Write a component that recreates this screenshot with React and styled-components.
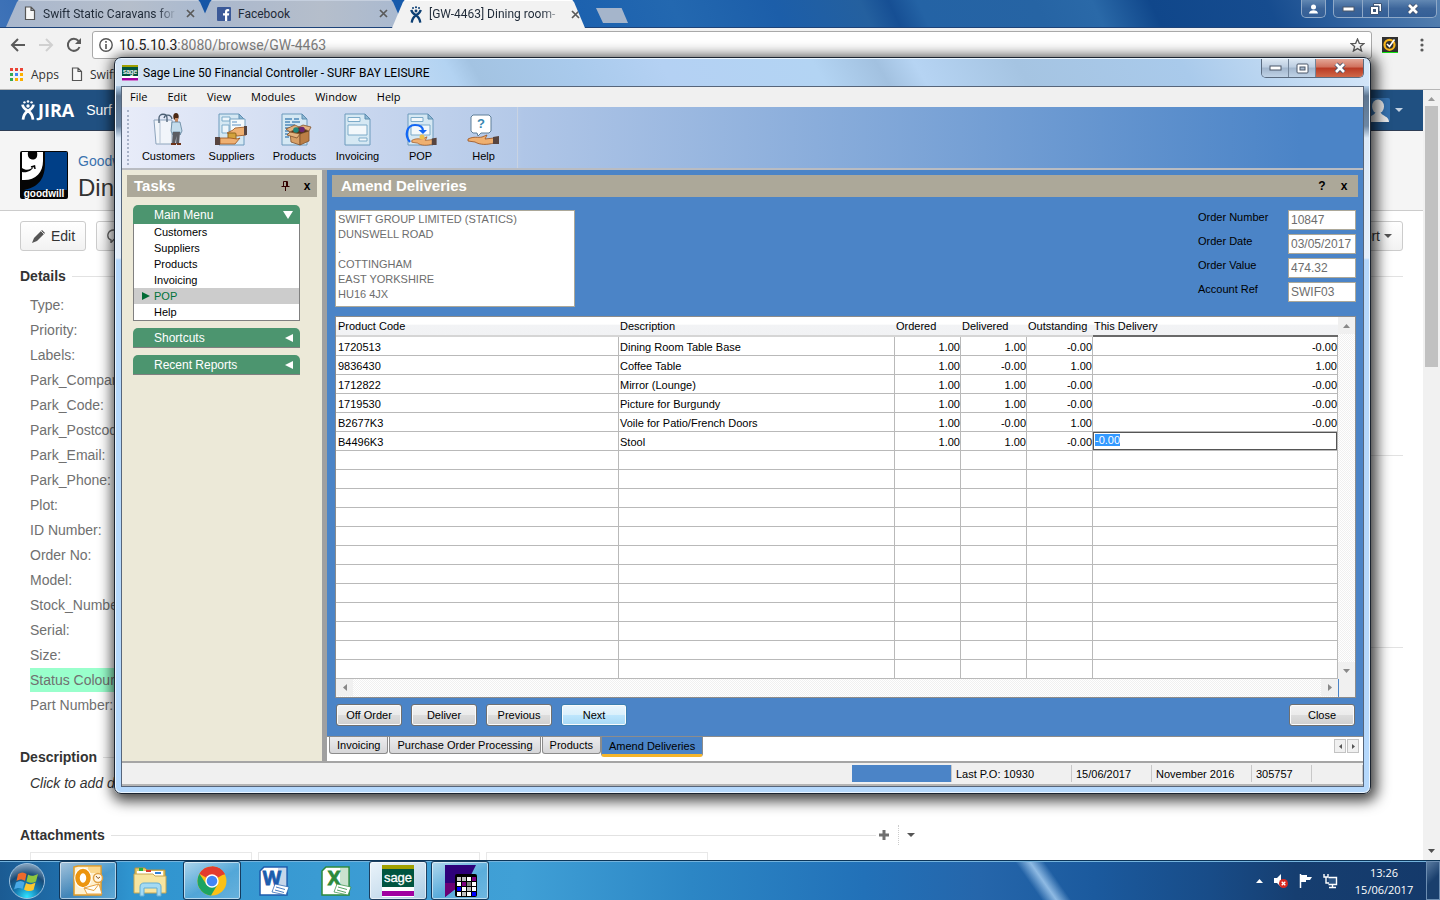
import React, { useEffect, useRef } from "react";
import styled, { createGlobalStyle } from "styled-components";

const GlobalStyle = createGlobalStyle`
	* {
		box-sizing: border-box;
	}

	body {
		margin: 0;
		overflow: hidden;
	}

	button, input, textarea {
		font: inherit;
		margin: 0;
	}

	svg {
		display: block;
		flex: none;
	}
`;

const segoe = `"Open Sans", "Noto Sans", sans-serif`;
const roboto = `Roboto, "Open Sans", sans-serif`;
const arial = `"Liberation Sans", Arial, sans-serif`;

const Desktop = styled.div`
	position: relative;
	display: flex;
	flex-direction: column;
	height: 100vh;
	overflow: hidden;
	background: #fff;
	font-family: ${arial};
`;

/* ---------- Browser ---------- */

const Browser = styled.div`
	flex: 1;
	min-height: 0;
	display: flex;
	flex-direction: column;
`;

const TabStrip = styled.div`
	height: 28px;
	flex: none;
	display: flex;
	align-items: flex-end;
	padding: 0 3px 0 6px;
	border-bottom: 1px solid #1d4379;
	background: linear-gradient(65deg, #3f73b8 0%, #1555a6 14%, #1a5fae 38%, #2368b0 47%, #1c5ea9 54%, #24609f 60%, #164f94 62%, #2463a5 64%, #2664a4 72%, #2a69a8 76%, #10478b 80%, #164c8f 88%, #3b6ba5 95%, #5580b0 100%);
`;

const BrowserTab = styled.div`
	position: relative;
	z-index: ${props => (props.$active ? 3 : props.$order)};
	width: ${props => (props.$active ? "193px" : "205px")};
	height: ${props => (props.$active ? "28px" : "27px")};
	margin: 0 ${props => (props.$active ? "11px" : "-12px")} ${props => (props.$active ? "-1px" : "0")} 0;
	padding: 0 ${props => (props.$active ? "5px" : "15px")} 0 18px;
	display: flex;
	align-items: center;
	gap: 7px;
	clip-path: polygon(0 100%, 11px 2px, 13px 0, calc(100% - 13px) 0, calc(100% - 11px) 2px, 100% 100%);
	background: ${props => (props.$active ? "#f2f2f2" : "linear-gradient(90deg, #a9b7cd, #b5becb 60%, #a9b9d0)")};
	box-shadow: inset 0 1px 0 ${props => (props.$active ? "#fff" : "#c5cfde")};
`;

const TabTitle = styled.span`
	flex: 1;
	overflow: hidden;
	white-space: nowrap;
	font: 12px/16px ${roboto};
	color: #1f2a38;
	mask-image: ${props => (props.$fade ? "linear-gradient(90deg, #000 85%, transparent 100%)" : "none")};
`;

const IconButton = styled.button`
	display: flex;
	align-items: center;
	justify-content: center;
	width: ${props => props.$w || 16}px;
	height: ${props => props.$h || 16}px;
	padding: 0;
	border: 0;
	background: transparent;
`;

const NewTab = styled.button`
	width: 32px;
	height: 15px;
	margin-bottom: 4px;
	padding: 0;
	border: 0;
	clip-path: polygon(0 0, 80% 0, 100% 100%, 22% 100%);
	background: #a5b5cb;
`;

const StripSpacer = styled.div`
	flex: 1;
`;

const ChromeButtons = styled.div`
	align-self: flex-start;
	display: flex;
	height: 18px;
	margin-left: 7px;
	border: 1px solid #8fa9c8;
	border-top: 0;
	border-radius: 0 0 5px 5px;
	overflow: hidden;
	background: linear-gradient(#6288b3, #3c659a 50%, #345f96);
`;

const ChromeButton = styled(IconButton)`
	height: 17px;
	border-right: 1px solid #8fa9c8;

	&:last-child {
		border-right: 0;
	}
`;

const NavBar = styled.div`
	height: 34px;
	flex: none;
	display: flex;
	align-items: center;
	padding: 0 10px 0 6px;
	background: #f2f2f2;
`;

const NavButtons = styled.div`
	display: flex;
	gap: 4px;
	margin-right: 6px;
`;

const Omnibox = styled.div`
	flex: 1;
	height: 28px;
	display: flex;
	align-items: center;
	gap: 6px;
	padding: 0 6px;
	border: 1px solid #a9a9a9;
	border-radius: 3px;
	background: #fff;
`;

const Address = styled.div`
	flex: 1;
	font: 14px/18px ${roboto};
	color: #808080;

	b {
		font-weight: 400;
		color: #222;
	}
`;

const NavExtras = styled.div`
	display: flex;
	align-items: center;
	gap: 16px;
	margin-left: 10px;
`;

const Bookmarks = styled.nav`
	height: 28px;
	flex: none;
	display: flex;
	align-items: center;
	gap: 12px;
	padding: 0 10px 2px;
	border-bottom: 1px solid #b6b6b6;
	background: #f2f2f2;
`;

const Bookmark = styled.a`
	display: flex;
	align-items: center;
	gap: 7px;
	font: 12px/16px ${segoe};
	color: #333;
	text-decoration: none;
`;

const Page = styled.div`
	flex: 1;
	min-height: 0;
	display: flex;
`;

const PageContent = styled.div`
	flex: 1;
	min-width: 0;
	overflow: hidden;
	background: #fff;
	color: #333;
`;

const PageScroll = styled.div`
	width: 17px;
	display: flex;
	flex-direction: column;
	justify-content: space-between;
	align-items: center;
	padding: 7px 2px;
	background: #f1f1f1;
`;

const PageThumb = styled.div`
	width: 13px;
	height: 261px;
	margin: 5px 0 auto;
	background: #c1c1c1;
`;

const JiraHeader = styled.header`
	height: 41px;
	display: flex;
	align-items: center;
	padding: 0 20px 0 21px;
	border-bottom: 1px solid #2e3d54;
	background: #205081;
	color: #fff;
	font-size: 14px;
`;

const JiraLogo = styled.a`
	display: flex;
	align-items: center;
	gap: 3px;
	margin-right: 12px;
	font: 700 18px/24px ${segoe};
	color: #fff;
	text-decoration: none;
`;

const Avatar = styled.div`
	margin-left: auto;
	display: flex;
	align-items: center;
	gap: 5px;
`;

const IssueHeader = styled.div`
	height: 80px;
	display: flex;
	align-items: flex-start;
	gap: 10px;
	padding: 20px;
	border-bottom: 1px solid #ccc;
	background: #f5f5f5;
`;

const IssueTitle = styled.div`
	a {
		display: block;
		font-size: 14px;
		line-height: 20px;
		color: #3b73af;
		text-decoration: none;
	}

	h1 {
		margin: 2px 0 0;
		font-size: 24px;
		line-height: 30px;
		font-weight: 400;
	}
`;

const IssueActions = styled.div`
	display: flex;
	gap: 10px;
	padding: 10px 20px;
`;

const JiraButton = styled.button`
	height: 30px;
	display: flex;
	align-items: center;
	gap: 4px;
	padding: 0 10px;
	margin-left: ${props => (props.$end ? "auto" : "0")};
	border: 1px solid #ccc;
	border-radius: 3px;
	background: linear-gradient(#fff, #f2f2f2);
	font-size: 14px;
	color: #333;
`;

const Columns = styled.div`
	display: grid;
	grid-template-columns: 895px 1fr;
	gap: 23px;
	padding: 5px 20px 0;
`;

const SectionHead = styled.div`
	display: flex;
	align-items: center;
	gap: 6px;
	height: 20px;
	margin-top: ${props => props.$top || 0}px;

	h2 {
		margin: 0;
		font-size: 14px;
		line-height: 20px;
	}
`;

const Rule = styled.div`
	flex: 1;
	height: 1px;
	background: #e2e2e2;
`;

const FieldList = styled.ul`
	margin: 7px 0 0;
	padding: 0 10px;
	list-style: none;
`;

const Field = styled.li`
	height: 24px;
	margin-bottom: 1px;
	width: 150px;
	font-size: 14px;
	line-height: 24px;
	color: #707070;
	background: ${props => (props.$marked ? "#99ffcc" : "none")};
`;

const Hint = styled.p`
	margin: 6px 10px 0;
	font-size: 14px;
	line-height: 20px;
	font-style: italic;
`;

const SectionTools = styled.div`
	display: flex;
	align-items: center;
	gap: 8px;
	margin-left: -4px;
`;

const DottedLine = styled.i`
	height: 20px;
	border-left: 1px dotted #ccc;
`;

const Attachments = styled.div`
	display: flex;
	gap: 6px;
	padding: 7px 10px 0;
`;

const Attachment = styled.div`
	width: 222px;
	height: 60px;
	border: 1px solid #e8e8e8;
`;

/* ---------- Sage window ---------- */

const SageWindow = styled.section`
	position: absolute;
	z-index: 10;
	top: 57px;
	left: 114px;
	right: 69px;
	bottom: 106px;
	display: flex;
	flex-direction: column;
	padding: 0 6px 6px;
	border: 1px solid #1b2430;
	border-radius: 7px;
	background: linear-gradient(#bcd8f3 0, #bcd8f3 27px, #5d7590 38px, #6d87a4 68px, #dce9f7 80px, #e4eef9 200px, #b5d8fc 202px, #b5d8fc 100%);
	box-shadow: inset 0 0 0 1px #eaf5ff, 2px 3px 14px 4px rgba(0,0,0,.75);
`;

const TitleBar = styled.div`
	height: 27px;
	flex: none;
	display: flex;
	align-items: center;
	gap: 5px;
	margin: 1px -5px 0;
	padding: 0 5px 0 6px;
	border-radius: 6px 6px 0 0;
	background: linear-gradient(60deg, #d5e4f4 0%, #c2dbf4 22%, #b3d3f2 27%, #a3c3e2 29%, #a9caec 37%, #b4d1f3 44%, #b3d4f3 56%, #a2c1e0 61%, #b6d4f3 64%, #a5c4e2 72%, #a9caeb 85%, #d5e7f9 100%);
`;

const WindowTitle = styled.h1`
	flex: 1;
	margin: 0;
	font: 400 12px/16px ${roboto};
	color: #000;
`;

const Caption = styled.div`
	align-self: flex-start;
	display: flex;
	height: 19px;
	border: 1px solid #5a6b80;
	border-top: 0;
	border-radius: 0 0 5px 5px;
	overflow: hidden;
`;

const CaptionButton = styled(IconButton)`
	width: ${props => (props.$close ? 47 : 27)}px;
	height: 18px;
	border-right: ${props => (props.$close ? "0" : "1px solid #73859a")};
	background: ${props => (props.$close
		? "linear-gradient(#e4a797, #d0705c 45%, #b93a24 50%, #d06848)"
		: "linear-gradient(#dbe7f3, #bccde0 45%, #a2b6cd 50%, #bfd2e6)")};
`;

const Client = styled.div`
	flex: 1;
	min-height: 0;
	display: flex;
	flex-direction: column;
	border: 1px solid #56657a;
	background: #f0f0f0;
`;

const MenuBar = styled.nav`
	height: 20px;
	flex: none;
	display: flex;
	align-items: center;
	gap: 20px;
	padding: 0 8px;
	background: #f0f0f0;

	a {
		font: 11px/16px ${segoe};
		color: #000;
		text-decoration: none;
	}
`;

const ToolBar = styled.div`
	height: 63px;
	flex: none;
	display: flex;
	border-bottom: 2px solid #b9bcc2;
	background: linear-gradient(90deg, #e8ecf9 0, #b4c9e8 395px, #b0c6e7 400px, #4b84c7 95%);
`;

const Grip = styled.i`
	width: 15px;
	margin: 3px -5px 3px 5px;
	border-left: 2px dotted #a9b3c8;
`;

const ToolGroup = styled.div`
	display: flex;
	padding-right: 2px;
	border-right: 1px solid #c9d3e2;
`;

const ToolButton = styled.button`
	width: 63px;
	display: flex;
	flex-direction: column;
	align-items: center;
	gap: 2px;
	padding: 6px 0 0;
	border: 0;
	background: transparent;
	font: 11px/14px ${arial};
	color: #000;
`;

const Workspace = styled.div`
	flex: 1;
	min-height: 0;
	display: flex;
	border-bottom: 2px solid #a5a5a5;
`;

const TaskPane = styled.aside`
	width: 205px;
	padding: 5px;
	border-right: 5px solid #a0a0a0;
	background: #ece9d8;
`;

const PaneHeader = styled.div`
	height: 22px;
	flex: none;
	display: flex;
	align-items: center;
	gap: ${props => (props.$wide ? 10 : 8)}px;
	padding: 0 ${props => (props.$wide ? 8 : 4)}px 0 ${props => (props.$wide ? 9 : 7)}px;
	background: #aca899;

	h2 {
		flex: 1;
		margin: 0;
		font-size: 15px;
		line-height: 20px;
		color: #fff;
	}

	button {
		width: 12px;
		height: 16px;
		padding: 0;
		border: 0;
		background: none;
		font: 700 12px/16px ${arial};
		color: #000;
	}
`;

const TaskGroups = styled.div`
	display: flex;
	flex-direction: column;
	gap: 7px;
	padding: 8px 17px 0 6px;
`;

const GroupTitle = styled.button`
	width: 100%;
	height: ${props => (props.$open ? 19 : 20)}px;
	display: flex;
	align-items: center;
	justify-content: space-between;
	padding: 0 7px 0 21px;
	border: 0;
	border-bottom: ${props => (props.$open ? "0" : "1px solid #808080")};
	border-radius: 5px 5px 0 0;
	background: #4c956f;
	font-size: 12px;
	line-height: 16px;
	color: #fff;
`;

const GroupList = styled.div`
	border: 1px solid #808080;
	border-top: 0;
	background: #fff;
`;

const GroupItem = styled.a`
	display: flex;
	align-items: center;
	height: 16px;
	padding-left: ${props => (props.$current ? 8 : 20)}px;
	gap: 4px;
	background: ${props => (props.$current ? "#ccc" : "none")};
	font-size: 11px;
	line-height: 16px;
	color: ${props => (props.$current ? "#00733a" : "#000")};
	text-decoration: none;
`;

const Main = styled.main`
	flex: 1;
	min-width: 0;
	display: flex;
	flex-direction: column;
	background: #4b84c7;
	font: 11px/14px ${arial};
	color: #000;
`;

const MainInner = styled.div`
	flex: 1;
	min-height: 0;
	display: flex;
	flex-direction: column;
	padding: 5px 5px 0;
`;

const OrderHead = styled.div`
	display: flex;
	justify-content: space-between;
	align-items: flex-start;
	padding: 13px 2px 9px 3px;
`;

const SupplierAddress = styled.textarea`
	width: 240px;
	height: 97px;
	padding: 1px 2px;
	border: 1px solid #aca899;
	resize: none;
	overflow: hidden;
	outline: 0;
	background: #fff;
	font: 11px/15px ${arial};
	color: #6d6d6d;
`;

const OrderFields = styled.div`
	display: flex;
	flex-direction: column;
	gap: 4px;
`;

const OrderField = styled.label`
	display: flex;
	gap: 10px;

	span {
		width: 80px;
	}

	input {
		width: 68px;
		height: 20px;
		padding: 0 2px;
		border: 1px solid #aca899;
		background: #fff;
		font-size: 12px;
		color: #6d6d6d;
	}
`;

const GridBox = styled.div`
	flex: 1;
	min-height: 0;
	display: grid;
	grid-template-columns: 1fr 17px;
	grid-template-rows: 1fr 18px;
	margin: 0 2px 0 3px;
	border: 1px solid #8c8c8c;
	background: #fff;
	overflow: hidden;
`;

const GridView = styled.div`
	overflow: hidden;
`;

const Grid = styled.table`
	width: 100%;
	table-layout: fixed;
	border-collapse: separate;
	border-spacing: 0;
	font: 11px/14px ${arial};

	th {
		height: 20px;
		padding: 0 1px 1px;
		border-bottom: 2px solid #d5d5d5;
		background: linear-gradient(#fff 40%, #f2f3f5 45%, #f1f2f4);
		font-weight: 400;
		text-align: left;
		white-space: nowrap;
	}

	th:first-child {
		padding-left: 2px;
	}

	th:last-child {
		border-bottom: 2px solid #696969;
	}
`;

const Cell = styled.td`
	height: 19px;
	padding: ${props => (props.$editing ? "0" : "2px 0 0 1px")};
	border-right: 1px solid #b9b9b9;
	border-bottom: 1px solid #b9b9b9;
	text-align: ${props => (props.$num ? "right" : "left")};
	white-space: nowrap;

	&:first-child {
		padding-left: 2px;
	}
`;

const CellInput = styled.input`
	display: block;
	width: 100%;
	height: 18px;
	padding: 0 1px 2px;
	border: 1px solid #555;
	outline: 0;
	background: #fff;
	color: #000;

	&::selection {
		background: #3399ff;
		color: #fff;
	}
`;

const ScrollTrack = styled.div`
	display: flex;
	flex-direction: ${props => (props.$row ? "row" : "column")};
	justify-content: space-between;
	background: repeating-conic-gradient(#f0f0f0 0 25%, #fff 0 50%) 0 0 / 2px 2px;
`;

const ScrollArrow = styled(IconButton)`
	width: 17px;
	height: 17px;
	background: #f0f0f0;
`;

const Corner = styled.div`
	border-left: 1px solid #4b84c7;
	background: #f0f0f0;
`;

const ButtonRow = styled.div`
	display: flex;
	gap: 9px;
	padding: 6px 3px 10px 4px;
`;

const SageButton = styled.button`
	width: 66px;
	height: 22px;
	margin-left: ${props => (props.$end ? "auto" : "0")};
	padding: 0;
	border: 1px solid ${props => (props.$hot ? "#3c7fb1" : "#707070")};
	border-radius: 3px;
	box-shadow: inset 0 0 0 1px #fbfbfb;
	background: ${props => (props.$hot
		? "linear-gradient(#eaf6fd, #d9f0fc 50%, #bee6fd 50%, #a7d9f5)"
		: "linear-gradient(#f2f2f2, #ebebeb 50%, #dddddd 50%, #cfcfcf)")};
	color: #000;
`;

const ViewTabs = styled.div`
	height: 25px;
	flex: none;
	display: flex;
	align-items: flex-start;
	gap: 1px;
	padding: 0 4px 0 2px;
	border-top: 1px solid #8c8c8c;
	background: #fff;
`;

const ViewTab = styled.button`
	height: ${props => (props.$active ? 20 : 17)}px;
	margin-left: ${props => (props.$active ? "-1px" : "0")};
	padding: 0 7px;
	border: 1px solid #8c8c8c;
	border-top: 0;
	border-bottom: ${props => (props.$active ? "3px solid #f5b52b" : "1px solid #8c8c8c")};
	border-radius: 0 0 3px 3px;
	background: ${props => (props.$active ? "#4b84c7" : "linear-gradient(#ececee, #d6d6d8)")};
	white-space: nowrap;
	color: #000;
`;

const TabScroll = styled.div`
	display: flex;
	gap: 1px;
	margin: 2px 0 0 auto;

	button {
		width: 12px;
		height: 14px;
		border: 1px solid #c3c3c3;
		background: #f0f0f0;
	}
`;

const StatusBar = styled.footer`
	height: 23px;
	flex: none;
	display: flex;
	justify-content: flex-end;
	padding: 2px 0;
	border-bottom: 2px solid #b5b5b5;
	background: #f0f0f0;
	font: 11px/18px ${arial};
	color: #000;
`;

const StatusCell = styled.span`
	width: ${props => props.$w}px;
	padding-left: 4px;
	border-right: 1px solid #c8c8c8;
	background: ${props => (props.$fill ? "#4b84c7" : "none")};
`;

/* ---------- Taskbar ---------- */

const Taskbar = styled.div`
	height: 40px;
	flex: none;
	display: flex;
	align-items: stretch;
	border-top: 1px solid #0c3558;
	box-shadow: inset 0 1px 0 #74b3dd;
	background: linear-gradient(55deg, transparent 71%, rgba(190,225,255,.7) 72%, transparent 73%),
		linear-gradient(90deg, #1b5b93 0, #1f6ca8 4%, #2f94cf 9%, #3a9bd3 22%, #40a0d6 36%, #2c86c5 48%, #2271b8 60%, #2566ab 68%, #1b5a9e 76%, #184c88 84%, #163e70 90%, #14396a 100%);
`;

const StartButton = styled(IconButton)`
	width: 54px;
	height: 39px;
	margin-right: 5px;
`;

const TaskButtons = styled.div`
	display: flex;
	gap: 4px;
`;

const TaskButton = styled(IconButton)`
	width: 58px;
	height: 39px;
	border: ${props => (props.$lit ? "1px solid rgba(10,45,80,.9)" : "1px solid transparent")};
	border-radius: 3px;
	box-shadow: ${props => (props.$lit ? "inset 0 0 0 1px rgba(255,255,255,.55)" : "none")};
	background: ${props => ({
		active: "linear-gradient(150deg, #eaf3fa, #cfe2f0 50%, #a9cce4)",
		open: "linear-gradient(150deg, rgba(255,255,255,.6), rgba(255,255,255,.15) 55%, rgba(255,255,255,.25))"
	})[props.$lit] || "none"};
`;

const Tray = styled.div`
	margin-left: auto;
	display: flex;
	align-items: center;
	gap: 10px;
`;

const Clock = styled.div`
	width: 60px;
	margin: 0 2px 0 6px;
	text-align: center;
	font: 11px/17px ${segoe};
	white-space: nowrap;
	color: #fff;
`;

const ShowDesktop = styled.button`
	align-self: stretch;
	width: 14px;
	padding: 0;
	border: 1px solid #6d8eb2;
	background: linear-gradient(135deg, #5a7ba0, #1a3f6d 50%);
`;

/* ---------- Icons ---------- */

const Cross = ({ color = "#5a5a5a", size = 9 }) => (
	<svg width={size} height={size} viewBox="0 0 9 9" aria-hidden="true">
		<path d="M1 1 L8 8 M8 1 L1 8" stroke={color} strokeWidth="1.7" />
	</svg>
);

const PageIcon = () => (
	<svg width="12" height="15" viewBox="0 0 12 15" aria-hidden="true">
		<path d="M1.5 1 H7 L10.5 4.500 V13.500 H1.500 Z M7 1 V4.500 H10.500" fill="#f7f7f7" stroke="#555" strokeWidth="1.2" />
	</svg>
);

const Facebook = () => (
	<svg width="14" height="14" viewBox="0 0 14 14" aria-hidden="true">
		<rect width="14" height="14" rx="1" fill="#3b5998" />
		<path d="M8 14 V8.500 H6 V6.300 H8 V4.800 C8 3 9 2.100 10.700 2.100 L12.200 2.200 V4.200 H11 C10.400 4.200 10.200 4.500 10.200 5 V6.300 H12.200 L11.900 8.500 H10.200 V14 Z" fill="#fff" />
	</svg>
);

const JiraMan = ({ color, size = 16 }) => (
	<svg width={Math.round(size * 0.7)} height={size} viewBox="0 0 15 22" aria-hidden="true">
		<g fill={color}>
			<circle cx="7.500" cy="1.600" r="1.400" />
			<circle cx="3.600" cy="2.600" r="1.300" />
			<circle cx="11.400" cy="2.600" r="1.300" />
			<circle cx="7.500" cy="6.500" r="1.900" />
		</g>
		<path d="M1.500 5 C2 9 5 10.500 7.500 12 C10.500 14 12.500 16.500 13 21.500 M13.500 5 C13 9 10 10.500 7.500 12 C4.500 14 2.500 16.500 2 21.500" fill="none" stroke={color} strokeWidth="3" />
	</svg>
);

const Triangle = ({ dir = "down", color = "#555", w = 8, h = 4 }) => {
	const shapes = {
		down: `0,0 ${w},0 ${w / 2},${h}`,
		up: `0,${h} ${w},${h} ${w / 2},0`,
		left: `${w},0 ${w},${h} 0,${h / 2}`,
		right: `0,0 0,${h} ${w},${h / 2}`
	};
	return (
		<svg width={w} height={h} aria-hidden="true">
			<polygon points={shapes[dir]} fill={color} />
		</svg>
	);
};

const Minimise = ({ outline = "#4b5768" }) => (
	<svg width="13" height="6" aria-hidden="true">
		<rect x="1" y="1" width="11" height="4" fill="#fff" stroke={outline} />
	</svg>
);

const Restore = () => (
	<svg width="12" height="12" viewBox="0 0 12 12" aria-hidden="true">
		<path d="M3.500 .5 H11.500 V8.500 H9 V3 H3.500 Z M.5 3.500 H8.500 V11.500 H.5 Z" fill="#fff" stroke="#3c5475" />
		<rect x="3" y="6" width="3" height="3" fill="#3c5475" />
	</svg>
);

const Maximise = () => (
	<svg width="13" height="11" aria-hidden="true">
		<rect x="1" y="1" width="11" height="9" rx="1" fill="#fff" stroke="#4b5768" />
		<rect x="4" y="4" width="5" height="3" fill="#a9bacd" stroke="#4b5768" />
	</svg>
);

const BoldCross = () => (
	<svg width="14" height="12" viewBox="0 0 14 12" aria-hidden="true">
		<path d="M3 2 L11 10 M11 2 L3 10" stroke="#43506a" strokeWidth="4.500" />
		<path d="M3 2 L11 10 M11 2 L3 10" stroke="#fff" strokeWidth="2.700" />
	</svg>
);

const SageLogo = ({ size = 16 }) => (
	<svg width={size} height={size} viewBox="0 0 32 32" aria-hidden="true">
		<rect width="32" height="32" fill="#fff" />
		<rect width="32" height="4" fill="#a0a000" />
		<rect y="4" width="32" height="18" fill="#005540" />
		<rect y="26" width="32" height="5" fill="#a000a0" />
		<text x="16" y="17" textAnchor="middle" fontFamily="Liberation Sans, sans-serif" fontSize="13" stroke="#fff" strokeWidth=".3" fill="#fff">sage</text>
	</svg>
);

const Goodwill = () => (
	<svg width="48" height="48" viewBox="0 0 48 48" aria-hidden="true">
		<rect width="48" height="48" rx="2" fill="#050505" />
		<path d="M25 1 H47 V39 H4 C20 36 25 26 25 12 Z" fill="#003f87" />
		<path d="M2 1 H8 C7 6 10 8.500 13 8.500 C16 8.500 18 6 17 1 H23 V10 C23 22 15 30 2 29 V21 C7 22 12 20 14 15 C11 19 6 20 2 17 Z" fill="#fff" />
		<circle cx="12.500" cy="4" r="4" fill="#050505" />
		<path d="M11 16 L14.500 15 L15 18" fill="none" stroke="#050505" strokeWidth="1.500" />
		<text x="24" y="46" textAnchor="middle" fontFamily="Liberation Sans, sans-serif" fontWeight="700" fontSize="10" fill="#fff">goodwill</text>
	</svg>
);

const Sheet = () => (
	<g>
		<path d="M4 1 H24 L29 6 V32 H4 Z" fill="#d5e8f3" stroke="#6c9abc" />
		<path d="M24 1 V6 H29 Z" fill="#8fb9d4" stroke="#5d8db0" />
	</g>
);

const Hand = () => (
	<g>
		<path d="M1 26 C7 23 11 25 15 24 L20 22 L18 26 L27 25 V30 C20 32 13 32 8 29 L1 28 Z" fill="#efb071" stroke="#99501d" strokeWidth=".8" />
		<path d="M26 24 L32 23 V31 L26 31 Z" fill="#57443f" />
	</g>
);

const toolIcons = {
	Customers: (
		<g>
			<path d="M2 7 H20 V31 H4 Z" fill="#f1f5fa" stroke="#8da4bc" />
			<path d="M8 7 V31" stroke="#b5c4d4" />
			<path d="M7 10 V5 C7 0 15 0 15 5 V9 M12 5 C13 1 19 1 20 6" fill="none" stroke="#4b5f73" strokeWidth="1.300" />
			<ellipse cx="24" cy="3.500" rx="2.700" ry="3.500" fill="#4b2814" />
			<path d="M23 5 H26 V9 H23 Z" fill="#c98c62" />
			<path d="M20 9 H28 L30 18 L28 22 V19 H21 V22 L19 18 Z" fill="#c3dcec" stroke="#5f8299" strokeWidth=".8" />
			<path d="M21 19 H28 L27 31 H24 L24.500 23 L23 31 H20 Z" fill="#5b5d63" />
			<path d="M19 30 H24 V32 H19 Z M25 30 H29 V32 H25 Z" fill="#6d3319" />
		</g>
	),
	Suppliers: (
		<g>
			<Sheet />
			<path d="M7 4 H15 V8 H7 Z M7 12 H14 V20 H7 Z" fill="#eef6fb" stroke="#7cabc9" />
			<path d="M15 6 H30 V20 H15 Z" fill="#f6fafc" stroke="#77a3c2" />
			<path d="M17 9 H22 M17 12 H26" stroke="#5c91c2" />
			<path d="M31 14 V22 L22 23 L12 20 L18 17 L20 15 Z" fill="#efb071" stroke="#99501d" strokeWidth=".8" />
			<path d="M29 13 H32 V22 H29 Z" fill="#57443f" />
			<rect x="13" y="20" width="8" height="7" rx="1" fill="#d3a23c" stroke="#8f661c" />
			<path d="M5 25 L15 25 L22 26 L25 25 L20 31 H5 Z" fill="#efb071" stroke="#99501d" strokeWidth=".8" />
			<path d="M0 24 H5 V32 H0 Z" fill="#57443f" />
		</g>
	),
	Products: (
		<g>
			<Sheet />
			<path d="M7 6 H14 M16 6 H21 M7 9 H12 M14 9 H22 M7 12 H17 M7 15 H12 M7 18 H12 M7 21 H11 M7 24 H11" stroke="#4f89bb" strokeWidth="1.300" />
			<path d="M12 19 L22 21 V32 L13 29 Z" fill="#d8a067" stroke="#80512b" strokeWidth=".8" />
			<path d="M22 21 L31 18 V28 L22 32 Z" fill="#bb7e45" stroke="#80512b" strokeWidth=".8" />
			<path d="M12 19 L21 14 L31 18 L22 21 Z" fill="#593516" />
			<path d="M12 19 L8 16 L17 12 L21 14 Z M31 18 L33 14 L25 12 L21 14 Z M12 19 L9 22 L19 25 L22 21 Z" fill="#e3b27e" stroke="#80512b" strokeWidth=".8" />
			<circle cx="18" cy="17" r="2.800" fill="#20877d" />
			<circle cx="24" cy="16.500" r="2.800" fill="#6b2770" />
		</g>
	),
	Invoicing: (
		<g>
			<Sheet />
			<path d="M7 4.500 H19 V8.500 H7 Z M7 12 H26 V22 H7 Z M18 25 H26 V28 H18 Z" fill="#f3f8fb" stroke="#7cabc9" />
		</g>
	),
	POP: (
		<g>
			<Sheet />
			<path d="M7 4.500 H19 V8.500 H7 Z M7 12 H26 V22 H7 Z" fill="#f3f8fb" stroke="#7cabc9" />
			<g transform="translate(7 4) scale(.8 .9)"><Hand /></g>
			<circle cx="18" cy="24" r="2.500" fill="#edc24f" />
			<path d="M6 29 C0 22 3 12 11 12 C17 12 19 15 19 18" fill="none" stroke="#1266f5" strokeWidth="2.200" />
			<path d="M14.500 17 H23 L19 21 Z" fill="#1266f5" />
		</g>
	),
	Help: (
		<g>
			<path d="M6 2 H22 L24 4 V18 L22 20 H14 L11 23 L10 20 H6 L4 18 V4 Z" fill="#fff" stroke="#5f7f99" />
			<text x="14" y="15" textAnchor="middle" fontFamily="Liberation Sans, sans-serif" fontWeight="700" fontSize="13" fill="#3a87b0">?</text>
			<Hand />
		</g>
	)
};

const AppsGrid = () => {
	const colors = ["#ea4335", "#ea4335", "#ea4335", "#34a853", "#4285f4", "#fbb000", "#34a853", "#fbb000", "#fbb000"];
	return (
		<svg width="14" height="14" aria-hidden="true">
			{colors.map((c, i) => <rect key={i} x={(i % 3) * 5} y={Math.floor(i / 3) * 5} width="3" height="3" fill={c} />)}
		</svg>
	);
};

const StartOrb = () => (
	<svg width="38" height="38" viewBox="0 0 38 38" aria-hidden="true">
		<defs>
			<radialGradient id="orb" cx=".5" cy=".95" r=".9">
				<stop offset="0" stopColor="#2fe3ff" />
				<stop offset=".4" stopColor="#1478b0" />
				<stop offset=".7" stopColor="#174a77" />
				<stop offset="1" stopColor="#7d9cb8" />
			</radialGradient>
		</defs>
		<circle cx="19" cy="19" r="17.500" fill="url(#orb)" stroke="#9dc1de" />
		<path d="M10 12 C13 10 16 10 18.500 12 L17 19 C14 17 12 17 8.500 19 Z" fill="#ee6a2c" />
		<path d="M20 12.500 C23 14.500 26 14 30 12 L28 19.500 C25 21.500 22 21 18.500 19.500 Z" fill="#8ec63f" />
		<path d="M8 20.500 C11 18.500 14 18.500 16.500 20.500 L14.500 27 C12 25.500 9 25.500 6 27.500 Z" fill="#49a9e6" />
		<path d="M18 21 C21 23 24 22.500 27.500 20.500 L25.500 28 C22 30 19 29 16 27.500 Z" fill="#fdc72f" />
	</svg>
);

const Outlook = () => (
	<svg width="32" height="32" viewBox="0 0 32 32" aria-hidden="true">
		<path d="M2 2 L6 1 H29 V30 H2 Z" fill="#fff1cf" stroke="#e49c25" strokeWidth="1.500" />
		<path d="M16 2 H28 V8 H16 Z" fill="#fbd88d" />
		<ellipse cx="11" cy="13" rx="6" ry="7.500" fill="#fff" stroke="#fff" strokeWidth="5.500" />
		<ellipse cx="11" cy="13" rx="5.500" ry="7" fill="none" stroke="#ec950f" strokeWidth="4.500" />
		<path d="M12 23 L27 19 L30 29 H15 Z" fill="#fffdf5" stroke="#e6a242" />
		<path d="M12 23 L22 25.500 L27 19" fill="none" stroke="#e6a242" />
		<circle cx="26" cy="13" r="4.500" fill="#fff8e7" stroke="#e2a244" strokeWidth="1.500" />
		<path d="M24 11 L26 13.500 L28 12" fill="none" stroke="#8c5720" />
	</svg>
);

const Explorer = () => (
	<svg width="34" height="32" viewBox="0 0 34 32" aria-hidden="true">
		<path d="M2 3 H12 L14 5 H32 V27 H2 Z" fill="#e8cb6c" stroke="#b9933a" />
		<path d="M4 6 H30 V14 H4 Z" fill="#fff" />
		<path d="M6 3 H10 V6 H6 Z" fill="#27b03b" />
		<path d="M13 5 H18 V7 H13 Z" fill="#d93b2c" />
		<path d="M22 7 H28 V9 H22 Z" fill="#2f83d8" />
		<path d="M1 9 H20 L22 11 H33 V28 H1 Z" fill="#f7e5a0" stroke="#c8a751" />
		<path d="M7 31 V22 C7 19 9 18 11 18 H24 C27 18 28 20 28 22 V31 H24 V23 H11 V31 Z" fill="#a4daf3" stroke="#62add5" />
	</svg>
);

const Chrome = () => (
	<svg width="30" height="30" viewBox="0 0 30 30" aria-hidden="true">
		<circle cx="15" cy="15" r="14.500" fill="#fbc116" />
		<path d="M15 15 L2.400 7.800 A14.500 14.500 0 0 1 27.600 7.800 Z" fill="#e33b2e" />
		<path d="M15 8.500 H28 A14.500 14.500 0 0 0 15 .5 Z" fill="#e33b2e" />
		<path d="M2.400 7.800 A14.500 14.500 0 0 0 14 29.500 L20.500 18.500 L9.500 18.500 Z" fill="#1da462" />
		<circle cx="15" cy="15" r="6.700" fill="#fff" />
		<circle cx="15" cy="15" r="5.300" fill="#4285f4" />
	</svg>
);

const OfficeIcon = ({ letter, color }) => (
	<svg width="32" height="32" viewBox="0 0 32 32" aria-hidden="true">
		<path d="M6 2 H29 V30 H2 V6 Z" fill="#fff" stroke={color} strokeWidth="1.500" />
		<path d="M20 3 H28 V28 H20 Z" fill={color} opacity=".25" />
		<text x="14" y="20" textAnchor="middle" fontFamily="Open Sans, sans-serif" fontWeight="700" fontSize="19" stroke={color} strokeWidth=".8" fill={color}>{letter}</text>
		<path d="M17 19 L31 22 L28 30 L14 27 Z" fill="#fff" stroke={color} strokeWidth=".7" />
		<path d="M18 22 L27 24.500 M17 25 L26 27.500" stroke={color} strokeWidth=".8" />
	</svg>
);

const Planner = () => {
	const cells = ["#c0c0c0", "#c0c0c0", "#fff", "#800080", "#fff", "#800080", "#808080", "#fff", "#0000ff", "#fff", "#c0c0c0", "#fff", "#fff", "#c0c0c0", "#fff", "#0000ff"];
	return (
		<svg width="34" height="32" viewBox="0 0 34 32" aria-hidden="true">
			<path d="M2 0 H33 L28 10 L12 24 L2 32 Z" fill="#2e007a" />
			<path d="M2 18 H15 V22 L2 32 Z" fill="#6b0075" />
			<rect x="12" y="9" width="22" height="23" rx="2" fill="#000" />
			{cells.map((c, i) => (
				<rect key={i} x={14 + (i % 4) * 5} y={12 + Math.floor(i / 4) * 5} width="4" height="4" fill={c} />
			))}
		</svg>
	);
};

/* ---------- Data ---------- */

const issueFields = [
	"Type:", "Priority:", "Labels:", "Park_Company:", "Park_Code:", "Park_Postcode:",
	"Park_Email:", "Park_Phone:", "Plot:", "ID Number:", "Order No:", "Model:",
	"Stock_Number:", "Serial:", "Size:", "Status Colour:", "Part Number:"
];

const columns = [
	["Product Code", 283], ["Description", 276], ["Ordered", 66],
	["Delivered", 66], ["Outstanding", 66], ["This Delivery"]
];

const lines = [
	["1720513", "Dining Room Table Base", "1.00", "1.00", "-0.00", "-0.00"],
	["9836430", "Coffee Table", "1.00", "-0.00", "1.00", "1.00"],
	["1712822", "Mirror (Lounge)", "1.00", "1.00", "-0.00", "-0.00"],
	["1719530", "Picture for Burgundy", "1.00", "1.00", "-0.00", "-0.00"],
	["B2677K3", "Voile for Patio/French Doors", "1.00", "-0.00", "1.00", "-0.00"],
	["B4496K3", "Stool", "1.00", "1.00", "-0.00", "-0.00"]
];

const blankLines = Array.from({ length: 12 }, () => ["", "", "", "", "", ""]);
const editedLine = 5;

const address = `SWIFT GROUP LIMITED (STATICS)
DUNSWELL ROAD
.
COTTINGHAM
EAST YORKSHIRE
HU16 4JX`;

const orderFields = [
	["Order Number", "10847"],
	["Order Date", "03/05/2017"],
	["Order Value", "474.32"],
	["Account Ref", "SWIF03"]
];

/* ---------- Sections ---------- */

const BrowserView = () => (
	<Browser>
		<TabStrip>
			<BrowserTab $order={2}>
				<PageIcon />
				<TabTitle $fade>Swift Static Caravans for</TabTitle>
				<IconButton $w={12} aria-label="Close tab"><Cross /></IconButton>
			</BrowserTab>
			<BrowserTab $order={1}>
				<Facebook />
				<TabTitle>Facebook</TabTitle>
				<IconButton $w={12} aria-label="Close tab"><Cross /></IconButton>
			</BrowserTab>
			<BrowserTab $active>
				<JiraMan color="#0d3f73" size={17} />
				<TabTitle $fade>[GW-4463] Dining room-</TabTitle>
				<IconButton $w={10} aria-label="Close tab"><Cross /></IconButton>
			</BrowserTab>
			<NewTab aria-label="New tab" />
			<StripSpacer />
			<ChromeButtons>
				<ChromeButton $w={23} aria-label="Profile">
					<svg width="11" height="10" aria-hidden="true">
						<circle cx="5.500" cy="3" r="2.500" fill="#fff" />
						<path d="M1 9.500 C1 5 10 5 10 9.500 Z" fill="#fff" />
					</svg>
				</ChromeButton>
			</ChromeButtons>
			<ChromeButtons>
				<ChromeButton $w={29} aria-label="Minimise"><Minimise /></ChromeButton>
				<ChromeButton $w={26} aria-label="Restore"><Restore /></ChromeButton>
				<ChromeButton $w={47} aria-label="Close"><BoldCross /></ChromeButton>
			</ChromeButtons>
		</TabStrip>
		<NavBar>
			<NavButtons>
				<IconButton $w={24} $h={24} aria-label="Back">
					<svg width="16" height="16"><path d="M15 8 H2 M8 2 L2 8 L8 14" fill="none" stroke="#5a5a5a" strokeWidth="2" /></svg>
				</IconButton>
				<IconButton $w={24} $h={24} aria-label="Forward">
					<svg width="16" height="16"><path d="M1 8 H14 M8 2 L14 8 L8 14" fill="none" stroke="#d0d0d0" strokeWidth="2" /></svg>
				</IconButton>
				<IconButton $w={24} $h={24} aria-label="Reload">
					<svg width="16" height="16"><path d="M13.500 10 A6 6 0 1 1 12.500 4" fill="none" stroke="#5a5a5a" strokeWidth="2" /><path d="M15 1 V7 H9 Z" fill="#5a5a5a" /></svg>
				</IconButton>
			</NavButtons>
			<Omnibox>
				<svg width="14" height="14"><circle cx="7" cy="7" r="6.200" fill="none" stroke="#555" strokeWidth="1.400" /><path d="M7 6 V11 M7 3 V4.800" stroke="#555" strokeWidth="1.600" /></svg>
				<Address><b>10.5.10.3</b>:8080/browse/GW-4463</Address>
				<IconButton aria-label="Bookmark this page">
					<svg width="15" height="14" viewBox="0 0 15 14"><path d="M7.500 1 L9.300 5.300 L14 5.600 L10.400 8.600 L11.600 13 L7.500 10.600 L3.400 13 L4.600 8.600 L1 5.600 L5.700 5.300 Z" fill="none" stroke="#5a5a5a" strokeWidth="1.300" /></svg>
				</IconButton>
			</Omnibox>
			<NavExtras>
				<svg width="16" height="16" aria-hidden="true">
					<rect width="16" height="16" fill="#303030" />
					<rect y="15" width="16" height="1" fill="#12e012" />
					<circle cx="7.500" cy="7.800" r="5" fill="none" stroke="#f7b51b" strokeWidth="2.200" />
					<path d="M5 7 L7.500 9.500 L12.500 2.500" fill="none" stroke="#fff" strokeWidth="1.600" />
				</svg>
				<IconButton aria-label="Menu">
					<svg width="4" height="14"><circle cx="2" cy="2" r="1.600" fill="#5a5a5a" /><circle cx="2" cy="7" r="1.600" fill="#5a5a5a" /><circle cx="2" cy="12" r="1.600" fill="#5a5a5a" /></svg>
				</IconButton>
			</NavExtras>
		</NavBar>
		<Bookmarks>
			<Bookmark href="#apps"><AppsGrid />Apps</Bookmark>
			<Bookmark href="#swift"><PageIcon />Swift</Bookmark>
		</Bookmarks>
		<Page>
			<PageContent>
				<JiraHeader>
					<JiraLogo href="#jira"><JiraMan color="#fff" size={20} />JIRA</JiraLogo>
					Surf
					<Avatar>
						<svg width="24" height="24" aria-hidden="true">
							<rect width="24" height="24" rx="2" fill="#3572b0" />
							<ellipse cx="12" cy="8.500" rx="6" ry="7" fill="#eee" />
							<path d="M1 24 C1 18 8 18 9 15 H15 C16 18 23 18 23 24 Z" fill="#eee" />
						</svg>
						<Triangle color="#c3d2e2" />
					</Avatar>
				</JiraHeader>
				<IssueHeader>
					<Goodwill />
					<IssueTitle>
						<a href="#project">Goodwill</a>
						<h1>Dining</h1>
					</IssueTitle>
				</IssueHeader>
				<IssueActions>
					<JiraButton>
						<svg width="16" height="16" viewBox="0 0 16 16"><path d="M1 15 L3 10 L11 2 L14 5 L6 13 Z" fill="#555" /><path d="M10 3 L13 6" stroke="#fff" strokeWidth=".8" /></svg>
						Edit
					</JiraButton>
					<JiraButton aria-label="Comment">
						<svg width="14" height="14" viewBox="0 0 14 14"><path d="M4 11 C-1 9 0 1 7 1 C14 1 15 10 7 10.500 L4 13.500 Z" fill="none" stroke="#666" strokeWidth="1.400" /></svg>
					</JiraButton>
					<JiraButton $end>Export<Triangle /></JiraButton>
				</IssueActions>
				<Columns>
					<div>
						<SectionHead><h2>Details</h2><Rule /></SectionHead>
						<FieldList>
							{issueFields.map(name => <Field key={name} $marked={name === "Status Colour:"}>{name}</Field>)}
						</FieldList>
						<SectionHead $top={30}><h2>Description</h2><Rule /></SectionHead>
						<Hint>Click to add description</Hint>
						<SectionHead $top={32}>
							<h2>Attachments</h2>
							<Rule />
							<SectionTools>
								<svg width="12" height="12"><path d="M6 1 V11 M1 6 H11" stroke="#707070" strokeWidth="3" /></svg>
								<DottedLine />
								<Triangle />
							</SectionTools>
						</SectionHead>
						<Attachments><Attachment /><Attachment /><Attachment /></Attachments>
					</div>
					<div>
						<SectionHead><Rule /></SectionHead>
						<SectionHead $top={159}><Rule /></SectionHead>
						<SectionHead $top={172}><Rule /></SectionHead>
					</div>
				</Columns>
			</PageContent>
			<PageScroll>
				<Triangle dir="up" color="#9a9a9a" w={7} />
				<PageThumb />
				<Triangle color="#505050" w={7} />
			</PageScroll>
		</Page>
	</Browser>
);

const TaskList = () => (
	<TaskPane>
		<PaneHeader>
			<h2>Tasks</h2>
			<button aria-label="Pin">
				<svg width="9" height="10"><path d="M2.500 .5 H6.500 V5.500 H2.500 Z M.5 5.500 H8.500 M4.500 5.500 V10 M5.500 1 V5" fill="none" stroke="#300" /></svg>
			</button>
			<button aria-label="Close tasks">x</button>
		</PaneHeader>
		<TaskGroups>
			<div>
				<GroupTitle $open>Main Menu<Triangle color="#fff" w={10} h={8} /></GroupTitle>
				<GroupList>
					{["Customers", "Suppliers", "Products", "Invoicing", "POP", "Help"].map(name => (
						<GroupItem key={name} href={`#${name}`} $current={name === "POP"}>
							{name === "POP" && <Triangle dir="right" color="#006b35" w={8} h={8} />}
							{name}
						</GroupItem>
					))}
				</GroupList>
			</div>
			<GroupTitle>Shortcuts<Triangle dir="left" color="#fff" w={8} h={8} /></GroupTitle>
			<GroupTitle>Recent Reports<Triangle dir="left" color="#fff" w={8} h={8} /></GroupTitle>
		</TaskGroups>
	</TaskPane>
);

const DeliveryGrid = () => {
	const editor = useRef(null);

	useEffect(() => {
		editor.current.focus();
		editor.current.select();
	}, []);

	return (
		<GridBox>
			<GridView>
				<Grid>
					<colgroup>
						{columns.map(([name, width]) => <col key={name} width={width} />)}
					</colgroup>
					<thead>
						<tr>{columns.map(([name]) => <th key={name}>{name}</th>)}</tr>
					</thead>
					<tbody>
						{[...lines, ...blankLines].map((line, row) => (
							<tr key={row}>
								{line.map((value, col) => {
									const editing = row === editedLine && col === 5;
									return (
										<Cell key={col} $num={col > 1} $editing={editing}>
											{editing
												? <CellInput ref={editor} defaultValue={value} aria-label="This Delivery" />
												: value}
										</Cell>
									);
								})}
							</tr>
						))}
					</tbody>
				</Grid>
			</GridView>
			<ScrollTrack>
				<ScrollArrow aria-label="Scroll up"><Triangle dir="up" color="#888" w={7} /></ScrollArrow>
				<ScrollArrow aria-label="Scroll down"><Triangle color="#888" w={7} /></ScrollArrow>
			</ScrollTrack>
			<ScrollTrack $row>
				<ScrollArrow aria-label="Scroll left"><Triangle dir="left" color="#888" w={4} h={7} /></ScrollArrow>
				<ScrollArrow aria-label="Scroll right"><Triangle dir="right" color="#888" w={4} h={7} /></ScrollArrow>
			</ScrollTrack>
			<Corner />
		</GridBox>
	);
};

const Sage = () => (
	<SageWindow>
		<TitleBar>
			<SageLogo />
			<WindowTitle>Sage Line 50 Financial Controller - SURF BAY LEISURE</WindowTitle>
			<Caption>
				<CaptionButton aria-label="Minimise"><Minimise /></CaptionButton>
				<CaptionButton aria-label="Maximise"><Maximise /></CaptionButton>
				<CaptionButton $close aria-label="Close"><BoldCross /></CaptionButton>
			</Caption>
		</TitleBar>
		<Client>
			<MenuBar>
				{["File", "Edit", "View", "Modules", "Window", "Help"].map(name => <a key={name} href={`#${name}`}>{name}</a>)}
			</MenuBar>
			<ToolBar>
				<Grip />
				<ToolGroup>
					{Object.keys(toolIcons).map(name => (
						<ToolButton key={name}>
							<svg width="34" height="34" viewBox="0 0 34 34" aria-hidden="true">{toolIcons[name]}</svg>
							{name}
						</ToolButton>
					))}
				</ToolGroup>
			</ToolBar>
			<Workspace>
				<TaskList />
				<Main>
					<MainInner>
						<PaneHeader $wide>
							<h2>Amend Deliveries</h2>
							<button aria-label="Help">?</button>
							<button aria-label="Close deliveries">x</button>
						</PaneHeader>
						<OrderHead>
							<SupplierAddress aria-label="Supplier address" readOnly value={address} />
							<OrderFields>
								{orderFields.map(([label, value]) => (
									<OrderField key={label}>
										<span>{label}</span>
										<input readOnly value={value} />
									</OrderField>
								))}
							</OrderFields>
						</OrderHead>
						<DeliveryGrid />
						<ButtonRow>
							<SageButton>Off Order</SageButton>
							<SageButton>Deliver</SageButton>
							<SageButton>Previous</SageButton>
							<SageButton $hot>Next</SageButton>
							<SageButton $end>Close</SageButton>
						</ButtonRow>
					</MainInner>
					<ViewTabs>
						<ViewTab>Invoicing</ViewTab>
						<ViewTab>Purchase Order Processing</ViewTab>
						<ViewTab>Products</ViewTab>
						<ViewTab $active>Amend Deliveries</ViewTab>
						<TabScroll>
							<IconButton aria-label="Previous tab"><Triangle dir="left" w={3} h={5} /></IconButton>
							<IconButton aria-label="Next tab"><Triangle dir="right" w={3} h={5} /></IconButton>
						</TabScroll>
					</ViewTabs>
				</Main>
			</Workspace>
			<StatusBar>
				<StatusCell $w={100} $fill />
				<StatusCell $w={120}>Last P.O: 10930</StatusCell>
				<StatusCell $w={80}>15/06/2017</StatusCell>
				<StatusCell $w={100}>November 2016</StatusCell>
				<StatusCell $w={60}>305757</StatusCell>
				<StatusCell $w={51} />
			</StatusBar>
		</Client>
	</SageWindow>
);

const WindowsTaskbar = () => (
	<Taskbar>
		<StartButton aria-label="Start"><StartOrb /></StartButton>
		<TaskButtons>
			<TaskButton $lit="open" aria-label="Outlook"><Outlook /></TaskButton>
			<TaskButton aria-label="Explorer"><Explorer /></TaskButton>
			<TaskButton $lit="open" aria-label="Chrome"><Chrome /></TaskButton>
			<TaskButton aria-label="Word"><OfficeIcon letter="W" color="#1c5cad" /></TaskButton>
			<TaskButton aria-label="Excel"><OfficeIcon letter="X" color="#2c8a3c" /></TaskButton>
			<TaskButton $lit="active" aria-label="Sage"><SageLogo size={32} /></TaskButton>
			<TaskButton $lit="open" aria-label="Planner"><Planner /></TaskButton>
		</TaskButtons>
		<Tray>
			<Triangle dir="up" color="#fff" w={7} />
			<svg width="16" height="16" aria-hidden="true">
				<path d="M1 5 H4 L8 1 V14 L4 10 H1 Z" fill="#fff" />
				<circle cx="10.500" cy="10.500" r="4.500" fill="#d8281f" />
				<path d="M8.700 8.700 L12.300 12.300 M12.300 8.700 L8.700 12.300" stroke="#fff" strokeWidth="1.300" />
			</svg>
			<svg width="14" height="16" aria-hidden="true">
				<path d="M1.500 1 V15" stroke="#fff" strokeWidth="1.500" />
				<path d="M2 2 H8 V4 H13 L11 7 H7 V9 H2 Z" fill="#fff" />
			</svg>
			<svg width="15" height="16" aria-hidden="true">
				<path d="M5.500 4.500 H13.500 V11.500 H5.500 M9.500 12 V14 M6 14.500 H13" fill="#2e5685" stroke="#fff" strokeWidth="1.400" />
				<path d="M1 1 V4 H5 V1 M3 4 V10 H6" fill="none" stroke="#fff" strokeWidth="1.400" />
			</svg>
			<Clock>13:26<br />15/06/2017</Clock>
			<ShowDesktop aria-label="Show desktop" />
		</Tray>
	</Taskbar>
);

const App = () => (
	<Desktop>
		<GlobalStyle />
		<BrowserView />
		<Sage />
		<WindowsTaskbar />
	</Desktop>
);

export default App;
